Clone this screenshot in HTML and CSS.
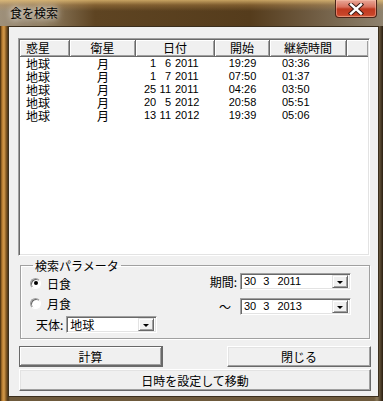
FILE: index.html
```html
<!DOCTYPE html>
<html lang="ja">
<head>
    <meta charset="UTF-8">
    <title>食を検索</title>
    <link rel="stylesheet" href="styles.css">
</head>
<body>
    <div class="window">
        <div class="titlebar">
            <span class="title">食を検索</span>
            <div class="close-btn">
                <svg width="16" height="12" viewBox="0 0 16 12">
                    <path d="M3 1.5 L13 10.5 M13 1.5 L3 10.5" stroke="#3a1a14" stroke-width="4.4" stroke-linecap="square"/>
                    <path d="M3 1.5 L13 10.5 M13 1.5 L3 10.5" stroke="#ffffff" stroke-width="2.4" stroke-linecap="square"/>
                </svg>
            </div>
        </div>

        <div class="client">
            <!-- eclipse list -->
            <div class="list">
                <div class="list-header">
                    <div class="hcell c1 left">惑星</div>
                    <div class="hcell c2">衛星</div>
                    <div class="hcell c3">日付</div>
                    <div class="hcell c4">開始</div>
                    <div class="hcell c5">継続時間</div>
                    <div class="hcell c6"></div>
                </div>
                <div class="row">
                    <div class="cell c1">地球</div><div class="cell c2 center">月</div>
                    <div class="cell c3 date"><span class="d">1</span><span class="m">6</span><span class="y">2011</span></div>
                    <div class="cell c4 center num">19:29</div><div class="cell c5 num">03:36</div>
                </div>
                <div class="row">
                    <div class="cell c1">地球</div><div class="cell c2 center">月</div>
                    <div class="cell c3 date"><span class="d">1</span><span class="m">7</span><span class="y">2011</span></div>
                    <div class="cell c4 center num">07:50</div><div class="cell c5 num">01:37</div>
                </div>
                <div class="row">
                    <div class="cell c1">地球</div><div class="cell c2 center">月</div>
                    <div class="cell c3 date"><span class="d">25</span><span class="m">11</span><span class="y">2011</span></div>
                    <div class="cell c4 center num">04:26</div><div class="cell c5 num">03:50</div>
                </div>
                <div class="row">
                    <div class="cell c1">地球</div><div class="cell c2 center">月</div>
                    <div class="cell c3 date"><span class="d">20</span><span class="m">5</span><span class="y">2012</span></div>
                    <div class="cell c4 center num">20:58</div><div class="cell c5 num">05:51</div>
                </div>
                <div class="row">
                    <div class="cell c1">地球</div><div class="cell c2 center">月</div>
                    <div class="cell c3 date"><span class="d">13</span><span class="m">11</span><span class="y">2012</span></div>
                    <div class="cell c4 center num">19:39</div><div class="cell c5 num">05:06</div>
                </div>
            </div>

            <!-- search parameters -->
            <fieldset class="params">
                <legend>検索パラメータ</legend>
                <div class="params-left">
                    <div class="radio-row"><span class="radio checked"></span>日食</div>
                    <div class="radio-row"><span class="radio"></span>月食</div>
                    <div class="body-row">
                        <span class="label">天体:</span>
                        <div class="combo combo-body">
                            <span class="combo-text">地球</span>
                            <span class="drop"></span>
                        </div>
                    </div>
                </div>
                <div class="params-right">
                    <div class="date-row">
                        <span class="label">期間:</span>
                        <div class="combo combo-date">
                            <span class="combo-text num"><span class="cd">30</span><span class="cm">3</span><span class="cy">2011</span></span>
                            <span class="drop"></span>
                        </div>
                    </div>
                    <div class="date-row">
                        <span class="label tilde">〜</span>
                        <div class="combo combo-date">
                            <span class="combo-text num"><span class="cd">30</span><span class="cm">3</span><span class="cy">2013</span></span>
                            <span class="drop"></span>
                        </div>
                    </div>
                </div>
            </fieldset>

            <div class="button-row">
                <button class="btn default">計算</button>
                <button class="btn">閉じる</button>
            </div>
            <button class="btn wide">日時を設定して移動</button>
        </div>
    </div>
</body>
</html>
```

FILE: styles.css
```css
body {
    margin: 0;
    font-family: "Liberation Sans", "Noto Sans CJK JP", sans-serif;
    font-size: 12px;
    color: #000;
    background: #5a4220;
}

.window {
    width: 383px;
    height: 401px;
    display: flex;
    flex-direction: column;
    background: linear-gradient(to right, #3a2508 0, #b47a30 2px, #d49a4a 4px, #8a5e26 6px, #4a3518 8px, #6e5a3c 10px, #6e5a3c 374px, #8a7858 377px, #2a1e10 383px);
}

/* title bar */
.titlebar {
    height: 26px;
    display: flex;
    justify-content: space-between;
    align-items: flex-start;
    padding: 0 6px 0 10px;
    background:
        linear-gradient(to bottom, rgba(236, 196, 120, 0.75) 0, rgba(200, 150, 80, 0.35) 5px, rgba(0, 0, 0, 0) 11px),
        linear-gradient(to right, #9e907a 0, #8e7c60 45px, #5e4422 95px, #553c1c 250px, #6e5a40 310px, #8e826e 383px);
}

.title {
    margin-top: 6px;
    font-family: "Noto Sans CJK JP", sans-serif;
    font-size: 12px;
    line-height: 14px;
    color: #000;
    text-shadow: 0 0 6px rgba(255, 255, 255, 0.9), 0 0 10px rgba(255, 255, 255, 0.6);
}

.close-btn {
    width: 42px;
    height: 18px;
    box-sizing: border-box;
    border: 1px solid #4a2418;
    border-top: none;
    border-radius: 0 0 4px 4px;
    background: linear-gradient(to bottom, #e8a898 0, #d8705c 7px, #c0391f 9px, #c8452a 15px, #e07a50 18px);
    box-shadow: inset 0 0 0 1px rgba(255, 200, 180, 0.45);
    display: flex;
    align-items: center;
    justify-content: center;
}

/* client area */
.client {
    margin: 0 4px 4px 8px;
    flex: 1;
    border: 1px solid #3b2e1c;
    background: #f0f0f0;
    padding: 11px 0 0 9px;
    display: flex;
    flex-direction: column;
}

/* list view */
.list {
    width: 352px;
    height: 218px;
    box-sizing: border-box;
    border: 1px solid;
    border-color: #a0a0a0 #fff #fff #a0a0a0;
    box-shadow: inset 1px 1px 0 #696969, inset -1px -1px 0 #e3e3e3;
    padding: 1px;
    background: #fff;
    font-family: "Noto Sans CJK JP", sans-serif;
}

.list-header {
    display: flex;
    height: 17px;
}

.hcell {
    box-sizing: border-box;
    height: 17px;
    line-height: 16px;
    text-align: center;
    background: #f0f0f0;
    border-right: 1px solid #696969;
    border-bottom: 1px solid #696969;
    box-shadow: inset 1px 1px 0 #fff, inset -1px -1px 0 #a0a0a0;
}

.hcell.left {
    text-align: left;
    padding-left: 6px;
}

.hcell.c6 {
    flex: 1;
    border-right: none;
}

.c1 { width: 50px; }
.c2 { width: 66px; }
.c3 { width: 79px; }
.c4 { width: 55px; }
.c5 { width: 77px; }

.row {
    display: flex;
    height: 13px;
    line-height: 13px;
}

.cell {
    box-sizing: border-box;
    white-space: nowrap;
}

.cell.c1 { padding-left: 6px; }
.cell.center { text-align: center; }
.cell.c5 { padding-left: 12px; }

.num {
    font-family: "Liberation Sans", sans-serif;
    font-size: 11px;
}

.cell.date {
    font-family: "Liberation Sans", sans-serif;
    font-size: 11px;
    padding-left: 8px;
}

.date span {
    display: inline-block;
    text-align: right;
}

.date .d { width: 12px; }
.date .m { width: 12px; margin-left: 3px; }
.date .y { margin-left: 4px; }

/* group box */
.params {
    width: 350px;
    box-sizing: border-box;
    margin: 3px 0 0 2px;
    padding: 1px 18px 5px 9px;
    border: 1px solid #a0a0a0;
    box-shadow: inset 1px 1px 0 #fff, 1px 1px 0 #fff;
    display: flex;
    justify-content: space-between;
    font-family: "Noto Sans CJK JP", sans-serif;
}

.params legend {
    padding: 0 2px;
    margin-left: 3px;
    line-height: 13px;
}

.params-left {
    display: flex;
    flex-direction: column;
}

.radio-row {
    height: 20px;
    display: flex;
    align-items: center;
    gap: 6px;
}

.radio {
    width: 11px;
    height: 11px;
    box-sizing: border-box;
    border-radius: 50%;
    border: 1px solid;
    border-color: #a0a0a0 #fff #fff #a0a0a0;
    background: #fff;
    box-shadow: inset 1px 1px 0 #696969;
    display: flex;
    align-items: center;
    justify-content: center;
}

.radio.checked::after {
    content: "";
    width: 4px;
    height: 4px;
    border-radius: 50%;
    background: #000;
}

.body-row {
    margin-top: 3px;
    margin-left: 6px;
    display: flex;
    align-items: center;
    gap: 3px;
}

.params-right {
    display: flex;
    flex-direction: column;
    gap: 8px;
}

.date-row {
    display: flex;
    align-items: center;
    justify-content: flex-end;
    gap: 3px;
}

.tilde {
    margin-right: 6px;
}

/* combo box */
.combo {
    height: 17px;
    box-sizing: border-box;
    border: 1px solid;
    border-color: #a0a0a0 #fff #fff #a0a0a0;
    box-shadow: inset 1px 1px 0 #696969, inset -1px -1px 0 #e3e3e3;
    background: #fff;
    display: flex;
    align-items: center;
    justify-content: space-between;
    padding: 0 2px 0 3px;
}

.combo-body { width: 91px; }
.combo-date { width: 111px; }

.combo-text {
    line-height: 13px;
}

.combo-text.num {
    font-size: 11px;
}

.cd, .cm, .cy {
    display: inline-block;
}

.cm { margin-left: 7px; }
.cy { margin-left: 8px; }

.drop {
    width: 16px;
    height: 13px;
    box-sizing: border-box;
    background: #f0f0f0;
    border: 1px solid;
    border-color: #e3e3e3 #696969 #696969 #e3e3e3;
    box-shadow: inset 1px 1px 0 #fff, inset -1px -1px 0 #a0a0a0;
    position: relative;
}

.drop::after {
    content: "";
    position: absolute;
    left: 4px;
    top: 5px;
    border-left: 3px solid transparent;
    border-right: 3px solid transparent;
    border-top: 3px solid #000;
}

/* buttons */
.button-row {
    margin-top: 7px;
    margin-left: 1px;
    width: 352px;
    display: flex;
    justify-content: space-between;
}

.btn {
    font-family: "Noto Sans CJK JP", sans-serif;
    font-size: 12px;
    color: #000;
    width: 144px;
    height: 21px;
    padding: 0;
    background: #f0f0f0;
    border: 1px solid;
    border-color: #fff #696969 #696969 #fff;
    box-shadow: inset -1px -1px 0 #a0a0a0, inset 1px 1px 0 #e3e3e3;
    line-height: 17px;
}

.btn.default {
    border: 1px solid #696969;
    border-bottom-width: 2px;
    border-right-width: 2px;
    box-shadow: inset 1px 1px 0 #fff, inset -1px -1px 0 #a0a0a0;
}

.btn.wide {
    margin-top: 2px;
    margin-left: 1px;
    width: 352px;
    height: 22px;
}
```
